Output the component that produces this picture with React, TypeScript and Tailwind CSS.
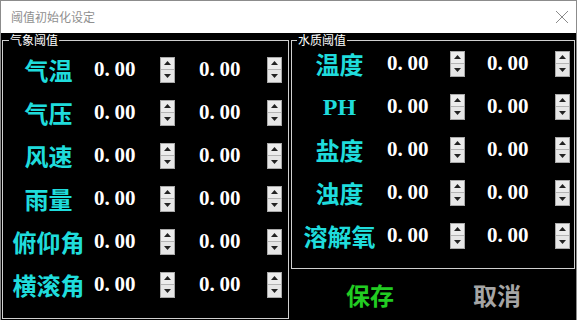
import React from 'react';

const cjk = { fontFamily: '"Noto Sans CJK SC", "Noto Sans", sans-serif' };
const num = { fontFamily: '"Liberation Serif", "DejaVu Serif", serif' };

function Spinner() {
    return (
        <div className="flex flex-col w-[15px] h-[26px] border border-[#a9a9a9] bg-[#e3e3e3]">
            <div className="flex-1 flex items-center justify-center border-b border-[#b4b4b4] bg-[#ececec]">
                <svg width="7" height="4" viewBox="0 0 7 4"><polygon points="3.5,0 7,4 0,4" fill="#222" /></svg>
            </div>
            <div className="flex-1 flex items-center justify-center bg-[#e6e6e6]">
                <svg width="7" height="4" viewBox="0 0 7 4"><polygon points="0,0 7,0 3.5,4" fill="#222" /></svg>
            </div>
        </div>
    );
}

function Value() {
    return (
        <span className="text-white text-[21px] font-bold leading-none" style={num}>
            0<span className="inline-block w-[10px]">.</span>00
        </span>
    );
}

function LeftRow({ label }: { label: string }) {
    return (
        <div className="flex items-center h-[43px]">
            <div className="w-[91px] text-center text-[24px] font-bold text-[#1fdcdc] leading-none" style={cjk}>{label}</div>
            <div className="w-[66px] flex"><Value /></div>
            <Spinner />
            <div className="w-[92px] pl-[24px] flex"><Value /></div>
            <Spinner />
        </div>
    );
}

function RightRow({ label }: { label: string }) {
    const isPh = label === 'PH';
    return (
        <div className="flex items-center h-[43px]">
            <div
                className="w-[95px] text-center text-[24px] font-bold text-[#1fdcdc] leading-none"
                style={isPh ? num : cjk}
            >
                {label}
            </div>
            <div className="w-[63px] flex"><Value /></div>
            <Spinner />
            <div className="w-[90px] pl-[22px] flex"><Value /></div>
            <Spinner />
        </div>
    );
}

export default function App() {
    return (
        <div className="w-[577px] h-[320px] bg-black border-t border-x border-[#8c8c8c] flex flex-col overflow-hidden">
            {/* 标题栏 */}
            <div className="h-[32px] bg-white flex items-center justify-between pl-[10px] pr-[7px] shrink-0">
                <span className="text-[12px] text-[#8f8f8f]" style={cjk}>阈值初始化设定</span>
                <svg width="14" height="14" viewBox="0 0 14 14">
                    <path d="M1 1 L13 13 M13 1 L1 13" stroke="#8a8a8a" strokeWidth="1" />
                </svg>
            </div>

            <div className="flex flex-1 pl-[1px]">
                {/* 气象阈值 */}
                <fieldset className="w-[287px] h-[285px] border border-[#d0d0d0] px-0 pt-[2px] pb-0 m-0 mt-[1px]">
                    <legend className="ml-[6px] px-[1px] text-[12px] leading-[12px] text-white" style={cjk}>气象阈值</legend>
                    <div className="flex flex-col">
                        {['气温', '气压', '风速', '雨量', '俯仰角', '横滚角'].map((l) => (
                            <LeftRow key={l} label={l} />
                        ))}
                    </div>
                </fieldset>

                <div className="flex flex-col ml-[2px] w-[284px]">
                    {/* 水质阈值 */}
                    <fieldset className="h-[235px] border border-[#d0d0d0] p-0 m-0 mt-[1px]">
                        <legend className="ml-[5px] px-[1px] text-[12px] leading-[12px] text-white" style={cjk}>水质阈值</legend>
                        <div className="flex flex-col -mt-[4px]">
                            {['温度', 'PH', '盐度', '浊度', '溶解氧'].map((l) => (
                                <RightRow key={l} label={l} />
                            ))}
                        </div>
                    </fieldset>

                    <div className="flex flex-1 items-center">
                        <div className="w-[158px] text-center text-[24px] font-bold text-[#22cc22]" style={cjk}>保存</div>
                        <div className="w-[96px] text-center text-[24px] font-bold text-[#a5a5a5]" style={cjk}>取消</div>
                    </div>
                </div>
            </div>
        </div>
    );
}
